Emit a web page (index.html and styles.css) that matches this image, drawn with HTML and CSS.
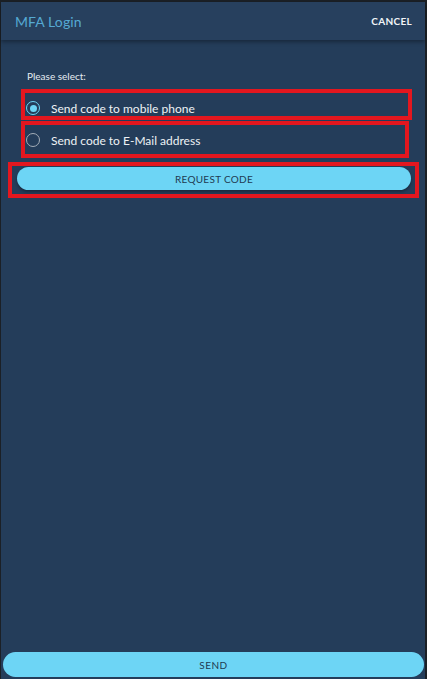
FILE: index.html
```html
<!DOCTYPE html>
<html lang="en">
<head>
<meta charset="utf-8">
<title>MFA Login</title>
<link rel="stylesheet" href="styles.css">
</head>
<body>
<div class="app">
  <header class="bar">
    <span class="title">MFA Login</span>
    <span class="cancel">CANCEL</span>
  </header>
  <main class="content">
    <p class="label">Please select:</p>
    <div class="options">
      <label class="option"><span class="radio checked"></span>Send code to mobile phone</label>
      <label class="option"><span class="radio"></span>Send code to E-Mail address</label>
    </div>
    <button class="pill request">REQUEST CODE</button>
    <span class="mark mark-1"></span>
    <span class="mark mark-2"></span>
    <span class="mark mark-3"></span>
  </main>
  <footer class="foot">
    <button class="pill send">SEND</button>
  </footer>
</div>
</body>
</html>
```
FILE: styles.css
```css
* { box-sizing: border-box; }
html, body { margin: 0; padding: 0; }
body {
  background: #1b2026;
  font-family: Lato, "Noto Sans", sans-serif;
  width: 427px;
  height: 679px;
  overflow: hidden;
}
.app {
  margin: 2px 2px 0 1px;
  width: 424px;
  height: 677px;
  background: #243d5a;
  display: flex;
  flex-direction: column;
}
.bar {
  height: 38px;
  flex: none;
  background: #27405e;
  box-shadow: 0 2px 4px rgba(0, 0, 0, 0.35);
  display: flex;
  align-items: center;
  justify-content: space-between;
  padding: 0 13px 0 14px;
  position: relative;
  z-index: 1;
}
.title {
  color: #55a9d3;
  font-size: 14px;
  letter-spacing: 0.1px;
}
.cancel {
  color: #f2f5f8;
  font-size: 10px;
  font-weight: 700;
  letter-spacing: 0.3px;
}
.content {
  flex: 1;
  position: relative;
  padding: 30px 14px 0 16px;
}
.label {
  margin: 0 0 9px 10px;
  color: #e6ecf1;
  font-size: 10px;
  line-height: 13px;
}
.options {
  display: flex;
  flex-direction: column;
  padding-left: 9px;
}
.option {
  height: 32px;
  display: flex;
  align-items: center;
  gap: 11px;
  color: #eef2f5;
  font-size: 12px;
}
.radio {
  width: 14px;
  height: 14px;
  border-radius: 50%;
  border: 1.5px solid #a3adb7;
  flex: none;
  display: flex;
  align-items: center;
  justify-content: center;
}
.radio.checked {
  border-color: #6dd5f5;
}
.radio.checked::after {
  content: "";
  width: 7px;
  height: 7px;
  border-radius: 50%;
  background: #6dd5f5;
}
.pill {
  display: block;
  width: 100%;
  border: none;
  border-radius: 13px;
  background: #6dd5f5;
  color: #1f3b52;
  font-family: Lato, "Noto Sans", sans-serif;
  font-size: 10px;
  letter-spacing: 0.3px;
  padding: 0;
}
.request {
  margin-top: 11px;
  height: 23px;
  box-shadow: 0 2px 3px rgba(0, 0, 0, 0.3);
}
.foot {
  flex: none;
  padding: 0 1px 2px 2px;
}
.send {
  height: 25px;
  border-radius: 13px;
  letter-spacing: 0.5px;
}
.mark {
  position: absolute;
  border: 4px solid #e3171f;
}
.mark-1 { left: 20px; top: 49px; width: 391px; height: 31px; }
.mark-2 { left: 20px; top: 81px; width: 388px; height: 37px; }
.mark-3 { left: 7px; top: 122px; width: 411px; height: 36px; }
```
